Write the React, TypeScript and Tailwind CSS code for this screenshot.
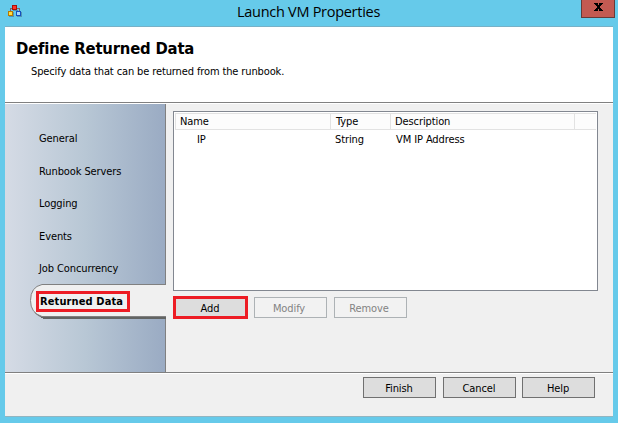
const tabs = ['General', 'Runbook Servers', 'Logging', 'Events', 'Job Concurrency'];

function AppIcon() {
  return (
    <svg width="16" height="16" viewBox="0 0 16 16" shapeRendering="crispEdges">
      <path d="M2.5 8V4.5H11.5V8" fill="none" stroke="#8a5c5c" />
      <path d="M5 6h5v1H5z M1 12h5v1H1z M9 12h5v1H9z M5 8h1v5H5z M13 8h1v5h-1z" fill="#4f94b5" />
      <rect x="4.5" y="1.5" width="4" height="4" fill="#ff3528" stroke="#a80f08" />
      <rect x="0.5" y="7.5" width="4" height="4" fill="#ffdf3f" stroke="#b97800" />
      <rect x="8.5" y="7.5" width="4" height="4" fill="#a5d8ff" stroke="#1550c0" />
    </svg>
  );
}

function Action({ label, muted = false }: { label: string; muted?: boolean }) {
  return (
    <button
      className={
        muted
          ? 'flex h-[21px] w-[73px] items-center justify-center border border-[#adb2b5] bg-[#f2f2f2] pt-[2px] pr-[3px] text-[#838383]'
          : 'flex h-[21px] w-[73px] items-center justify-center border border-[#707070] bg-[#dddddd] pt-[2px] pr-px text-black'
      }
    >
      {label}
    </button>
  );
}

export default function App() {
  return (
    <div className="flex h-[423px] w-[618px] flex-col overflow-hidden bg-[#66caea] px-[5px] font-['DejaVu_Sans_Condensed','DejaVu_Sans',sans-serif] text-[11px] leading-[14px] tracking-[-0.1px] text-black [font-stretch:condensed]">
      <header className="-mr-[2px] flex h-[26px] shrink-0 items-start">
        <div className="w-[34px] pt-1 pl-[3px]"><AppIcon /></div>
        <h1 className="flex-1 pt-px pr-[3px] text-center font-['Open_Sans','Noto_Sans',sans-serif] text-[14.5px] leading-[22px] tracking-[-0.28px] [font-stretch:normal]">Launch VM Properties</h1>
        <button className="flex h-[18px] w-[34px] items-start justify-center border border-t-0 border-[#663b39] bg-[#c35a52] pt-[3px]" aria-label="Close">
          <svg width="9" height="8" viewBox="0 0 9 8" shapeRendering="crispEdges">
            <path d="M0 0h4v1H0z M5 0h4v1H5z M1 1h3v1H1z M5 1h3v1H5z M2 2h5v1H2z M3 3h3v2H3z M2 5h5v1H2z M1 6h3v1H1z M5 6h3v1H5z M0 7h4v1H0z M5 7h4v1H5z" />
          </svg>
        </button>
      </header>
      <main className="flex h-[391px] w-[608px] shrink-0 flex-col border-t border-b border-t-[#77b1c7] border-b-[#91b5c1] bg-[#f0f0f0]">
        <section className="h-[76px] shrink-0 border-b border-[#808080] bg-white pt-[10px]">
          <h2 className="pl-[11px] text-[16.5px] leading-6 font-bold tracking-[-0.2px] whitespace-nowrap">Define Returned Data</h2>
          <p className="pt-[4px] pl-[26px] tracking-[-0.12px]">Specify data that can be returned from the runbook.</p>
        </section>
        <section className="flex h-[270px] shrink-0 border-t border-b border-t-white border-b-[#808080]">
          <nav className="h-[268px] w-[161px] shrink-0 border-r border-[#808080] bg-linear-to-r from-[#d5dbe5] via-[#b8c7d5] to-[#9aabc3]">
            <div className="flex h-[180px] flex-col justify-between pt-[28px] pb-[8px] pl-[34px]">
              {tabs.map((tab) => (
                <div key={tab} className="h-[14px] shrink-0 whitespace-nowrap">{tab}</div>
              ))}
            </div>
            <div className="relative ml-[25px] h-[35px] w-[136px]">
              <svg className="absolute inset-0" width="136" height="35" viewBox="0 0 136 35">
                <path d="M136 34H14Q8 33 4 28L14 32H136z" fill="#626463" />
                <path d="M136 0.5H12Q0.5 3 0.5 16.5Q0.5 29 12 32.5H136" fill="#f0f0f0" stroke="#808080" />
                <path d="M11 33.5H136M13 34.5H136" stroke="#626463" />
              </svg>
              <div className="absolute top-[7px] left-[6px] flex h-[21px] w-[94px] items-center border-[3px] border-[#ed1c24] pl-px font-bold tracking-[0.12px] whitespace-nowrap">Returned Data</div>
            </div>
          </nav>
          <div className="pt-[7px] pl-[7px]">
            <div className="h-[180px] w-[425px] border border-[#828790] bg-white p-px">
              <div className="flex h-[17px] border-t border-b border-[#e2e2e2] bg-[#fcfcfc]">
                <div className="w-[156px] border-r border-l border-[#e2e2e2] pt-px pl-1">Name</div>
                <div className="w-[60px] border-r border-[#e2e2e2] pt-px pl-[5px]">Type</div>
                <div className="w-[184px] border-r border-[#e2e2e2] pt-px pl-[4px]">Description</div>
              </div>
              <div className="flex pt-[3px]">
                <div className="w-[156px] pl-[22px]">IP</div>
                <div className="w-[60px] pl-[4px]">String</div>
                <div className="pl-[5px]">VM IP Address</div>
              </div>
            </div>
            <div className="flex pt-[5px]">
              <button className="mr-[6px] flex h-[23px] w-[75px] items-center justify-center border-[3px] border-[#ed1c24] bg-[#dddddd] pt-[2px] pr-px">Add</button>
              <div className="mr-[7px] pt-px"><Action label="Modify" muted /></div>
              <div className="pt-px"><Action label="Remove" muted /></div>
            </div>
          </div>
        </section>
        <footer className="flex flex-1 border-t border-white pt-[3px] pl-[358px]">
          <Action label="Finish" />
          <div className="ml-[7px]"><Action label="Cancel" /></div>
          <div className="ml-[6px]"><Action label="Help" /></div>
        </footer>
      </main>
    </div>
  );
}
